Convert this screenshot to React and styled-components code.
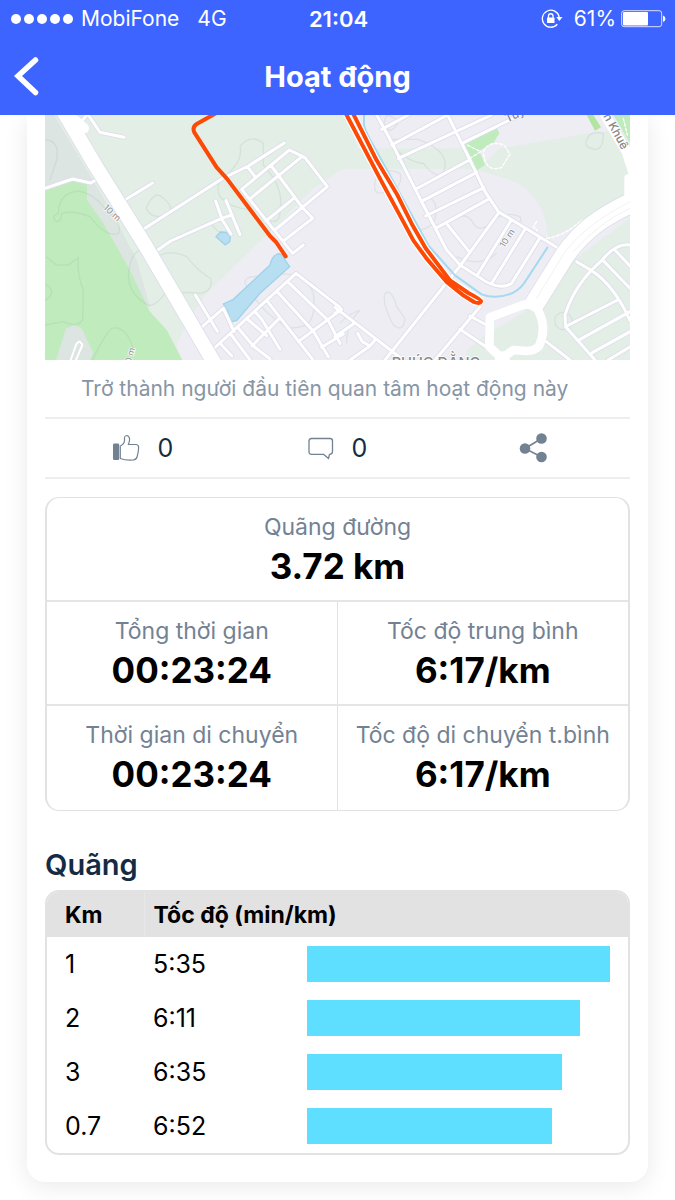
import React from "react";
import styled, { createGlobalStyle } from "styled-components";

const stats = [
  { label: "Quãng đường", value: "3.72 km", wide: true },
  { label: "Tổng thời gian", value: "00:23:24" },
  { label: "Tốc độ trung bình", value: "6:17/km" },
  { label: "Thời gian di chuyển", value: "00:23:24" },
  { label: "Tốc độ di chuyển t.bình", value: "6:17/km" },
];

const splits = [
  { km: "1", pace: "5:35", percent: 100 },
  { km: "2", pace: "6:11", percent: 90 },
  { km: "3", pace: "6:35", percent: 84 },
  { km: "0.7", pace: "6:52", percent: 81 },
];

// Streets on the left half of the map
const westStreets = `
  M145 15 L180 67 L252 82 M15 235 L98 207 L152 219 L176 206
  M122 60 L122 38 L140 15 M258 268 L338 219
  M310 358 L545 207 L625 168 L733 99
  M350 422 L392 393 L545 325 L575 315 M527 273 L547 330 L573 372 M558 272 L600 374
  M605 238 L748 120 L795 143 L862 230 L705 360
  M628 268 L783 142 M622 170 L645 200 M692 165 L785 290 L818 325 L730 393
  M678 333 L765 262 M605 238 L758 430 L790 405
  M466 555 L532 664 M484 652 L550 595 L582 665
  M520 717 L768 490 L900 592 M572 672 L630 750 M540 700 L575 737
  M595 655 L640 708 L690 747 M625 630 L680 677 M648 608 L665 628 L720 718
  M683 575 L818 748 M712 545 L820 664 L865 740 M743 515 L865 632 L900 700
  M636 708 L718 625 M775 695 L905 598 M845 712 L910 672`;

// Streets on the right half of the map
const eastStreets = `
  M125 15 L165 88 L265 285 L335 420 L375 465 L430 500 Q490 545 530 520 L612 388
  M338 15 L405 150 L450 245 L490 305 L665 412
  M140 58 L220 15 M170 105 L332 18 M190 145 L470 15 M385 98 L555 15
  M243 237 L403 150 M258 275 L425 187 M272 318 L447 233 M302 355 L465 265
  M338 345 L405 428 M490 310 L375 468 L150 750 M527 333 L427 495 M570 358 L470 520
  M0 592 L205 750 M435 590 L300 750 M405 618 L460 648 M375 658 L455 712
  M0 610 L15 600 M0 680 L60 638 M68 670 L82 695 L105 708 L45 750 M120 690 L105 708
  M625 688 L705 750 M725 455 L772 483 Q840 530 885 632
  M885 405 Q840 400 800 452 Q720 520 690 615 L692 650 L780 750
  M695 648 L848 570 M735 688 L885 605 M772 728 L885 665 M820 750 L885 710
  M838 418 L885 468 M805 452 L885 535`;

const GlobalStyle = createGlobalStyle`
  * {
    box-sizing: border-box;
  }

  body {
    margin: 0;
    background: #fff;
    color: #000;
    font-family: Inter, "Noto Sans", sans-serif;
  }
`;

const RouteMap = () => (
  <MapDrawing
    viewBox="15 15 1755 735"
    preserveAspectRatio="xMidYMid slice"
    role="img"
    aria-label="Bản đồ hoạt động"
  >
    <rect x="15" y="15" width="1755" height="735" fill="#eeedf4" />

    {/* land use */}
    <path
      fill="#e3eee6"
      d="M15 15 H915 L955 115 H1275 L1305 177 H915 Q895 183 885 192 L820 235 L680 375 L500 550 L445 630 L410 705 L425 750 H15 Z"
    />
    <path
      fill="#e3eee6"
      d="M1380 115 L1655 68 L1770 60 V275 L1525 385 Q1515 250 1405 208 L1310 180 Z"
    />
    <path fill="#e3eee6" d="M1770 325 L1640 420 L1430 600 L1280 720 V750 H1770 Z" />
    <path fill="#dce5e2" d="M15 15 H42 L215 305 L290 450 L330 590 L60 560 L15 240 Z" />
    <path
      fill="#bfebbd"
      d="M15 242 L100 212 L141 222 V270 L190 340 L265 472 L330 605 L380 660 L427 750 H15 Z"
    />
    <path fill="#dce5e2" d="M48 750 L78 655 L103 645 L125 655 L160 728 L150 750 Z" />
    <path
      fill="#bfebbd"
      d="M1275 102 L1370 52 L1378 70 L1360 100 L1318 122 L1335 165 L1310 181 Z M1720 15 H1770 V98 Z"
    />
    <path fill="#b2e5a0" d="M1640 15 H1660 L1683 52 L1665 62 Z" />

    {/* contour lines */}
    <g fill="none" stroke="#8da79a" strokeOpacity="0.16" strokeWidth="4">
      <path d="M15 90 Q60 90 50 150 L30 210 M50 335 Q30 320 55 310 Q55 250 115 243 Q160 250 190 290 Q250 340 235 370 Q200 385 150 320 Q100 300 65 310 Q65 335 50 335" />
      <path d="M18 440 L50 465 H85 L115 443 Q110 490 130 540 L128 630 Q110 655 70 635 L15 645 M15 522 Q45 540 30 560 L15 572" />
      <path d="M158 750 Q190 680 215 655 Q255 645 278 710 V730 M318 295 Q345 235 370 265 Q400 290 390 310 Q340 335 318 295" />
      <path d="M325 417 Q270 410 265 500 Q270 560 330 587 Q355 580 375 550 Q450 545 485 550 Q520 540 512 505 Q480 490 440 440 Q400 420 360 435" />
      <path d="M600 108 Q635 70 670 100 V165 Q720 220 722 270 Q725 350 690 330 M600 108 Q610 150 565 190 Q520 220 540 260 Q570 295 630 298" />
      <path d="M620 530 Q600 495 665 500 Q790 470 820 550 Q830 620 800 645 Q740 665 725 640 Q670 610 620 530 M512 340 Q540 315 570 365 H535 Z" />
      <path d="M1040 15 Q1020 60 1055 60 Q1095 30 1040 15 M1055 88 H1135 Q1245 130 1205 195 Q1180 200 1150 160 Q1110 160 1055 105" />
      <path d="M1015 250 Q995 240 1010 200 Q1040 170 1080 190 Q1095 240 1015 250 M1150 290 Q1160 240 1185 280 Q1200 350 1140 360 M1250 325 Q1280 305 1300 340 Q1320 370 1350 340 Q1390 300 1440 320 Q1450 340 1420 340" />
      <path d="M1035 550 Q1055 535 1070 590 L1095 625 Q1090 670 1060 645 Q1025 580 1035 550 M1640 90 Q1650 60 1690 70 Q1690 125 1660 117 Q1630 110 1640 90" />
      <circle cx="1570" cy="633" r="26" />
      <path d="M1250 440 Q1320 475 1370 430 M920 700 Q920 640 960 600 Q920 615 900 640" />
    </g>

    {/* water */}
    <path
      fill="#b7dff1"
      stroke="#9fd2ea"
      strokeWidth="4"
      d="M712 432 Q728 428 735 450 L749 470 L660 550 L590 632 L573 635 L562 600 L550 582 L580 568 L690 465 Q695 440 712 432 Z M528 380 L542 366 L560 368 L571 380 L569 395 L556 405 L543 394 Z"
    />

    {/* streets: casing, then white fill */}
    <g fill="none" strokeLinejoin="round" strokeLinecap="round">
      <g stroke="#dddeea" strokeWidth="14">
        <path d={westStreets} />
        <path d={eastStreets} transform="translate(885 0)" />
      </g>
      <g stroke="#fff" strokeWidth="9">
        <path d={westStreets} />
        <path d={eastStreets} transform="translate(885 0)" />
      </g>
      <path stroke="#fff" strokeWidth="6" d="M92 750 L108 705 Q118 685 127 705 L108 750" />
      <path
        stroke="#fff"
        strokeWidth="4"
        strokeDasharray="9 6"
        d="M1282 105 L1322 125 L1290 145 M1330 125 Q1345 90 1392 105 L1410 132 L1385 172 Q1335 190 1330 125 M1520 385 Q1580 375 1625 330 M1490 335 L1480 350 L1492 362 M1750 25 L1762 75"
      />

      {/* main roads */}
      <path stroke="#dddeea" strokeWidth="48" d="M68 0 L165 165 L318 410 L535 780" />
      <path stroke="#fff" strokeWidth="43" d="M68 0 L165 165 L318 410 L535 780" />
      <path stroke="#fff" strokeWidth="30" d="M70 0 L132 55 M1695 15 L1760 125 L1785 205" />
      <path stroke="#dddeea" strokeWidth="64" d="M1800 266 L1770 280 Q1700 315 1660 345 Q1610 385 1575 435 L1475 595" />
      <path stroke="#fff" strokeWidth="59" d="M1800 266 L1770 280 Q1700 315 1660 345 Q1610 385 1575 435 L1475 595" />
      <path stroke="#fff" strokeWidth="24" d="M1765 205 V280" />
      <path stroke="#f2f2f5" strokeWidth="3" d="M1770 275 Q1640 340 1575 425 L1490 565 M1770 295 Q1680 335 1600 425" />
      <path
        fill="#e3eee6"
        stroke="#fff"
        strokeWidth="26"
        d="M1350 622 L1455 583 Q1482 583 1495 602 Q1522 655 1497 708 Q1485 722 1460 723 L1420 720 L1385 745 L1348 710 Z"
      />
      <path fill="#eeedf4" stroke="none" d="M1363 632 L1450 599 L1458 602 L1363 660 Z" />
      <path stroke="#fff" strokeWidth="42" d="M1388 745 L1380 770" />

      {/* canal */}
      <path
        stroke="#a3daf0"
        strokeWidth="6"
        d="M972 15 V46 Q980 75 1000 106 L1165 406 L1245 496 L1325 553 Q1370 570 1420 548 Q1445 535 1460 508 L1522 413"
      />
    </g>

    {/* recorded route */}
    <g fill="none" strokeLinejoin="round" strokeLinecap="round">
      <path
        fill="#fff"
        stroke="#fff"
        strokeWidth="19"
        d="M912 0 L1020 206 L1085 326 L1120 391 L1160 446 L1220 516 L1270 556 L1308 579 L1320 568 L1230 511 L1158 416 L1115 341 L1070 251 L1010 151 L934 0"
      />
      <path
        stroke="#fc4905"
        strokeWidth="12"
        d="M545 0 L470 42 Q456 51 463 67 L530 172 L560 205 L690 378 L708 396 L737 439"
      />
      <path
        stroke="#fc4905"
        strokeWidth="12"
        d="M912 0 L1020 206 L1085 326 L1120 391 L1160 446 L1220 516 L1270 556 L1302 576 Q1320 583 1323 574 Q1323 568 1285 549 L1230 511 L1158 416 L1115 341 L1070 251 L1010 151 L934 0"
      />
    </g>

    <MapLabel transform="translate(188 295) rotate(43)">10 m</MapLabel>
    <MapLabel transform="translate(270 773) rotate(-75)">10 m</MapLabel>
    <MapLabel transform="translate(1393 415) rotate(-57)">10 m</MapLabel>
    <MapLabel $street transform="translate(1402 38) rotate(-25)">
      Tuy
    </MapLabel>
    <MapLabel $street transform="translate(1689 18) rotate(61)">
      n Khuê
    </MapLabel>
    <MapLabel $place x="1055" y="774">
      PHÚC ĐẰNG
    </MapLabel>
  </MapDrawing>
);

const BackIcon = () => (
  <svg width="28" height="42" viewBox="0 0 28 42" aria-hidden="true">
    <path
      d="M23.500 4 L6 20 L23.500 36.500"
      fill="none"
      stroke="#fff"
      strokeWidth="5.500"
      strokeLinecap="round"
      strokeLinejoin="miter"
    />
  </svg>
);

const RotationLockIcon = () => (
  <svg width="22" height="20" viewBox="0 0 22 20" aria-hidden="true">
    <path
      d="M18.200 8 A8.500 8.500 0 1 0 16.300 15.300"
      fill="none"
      stroke="#fff"
      strokeWidth="1.300"
    />
    <path d="M15.200 8 H21.500 L18.300 12 Z" fill="#fff" />
    <rect x="6" y="8.500" width="7.500" height="5.500" rx="0.600" fill="#fff" />
    <path d="M7.500 9 V7 A2.200 2.200 0 0 1 12 7 V9" fill="none" stroke="#fff" strokeWidth="1.300" />
  </svg>
);

const BatteryIcon = () => (
  <svg width="45" height="18" viewBox="0 0 45 18" aria-hidden="true">
    <rect x="0.700" y="0.700" width="40" height="16" rx="2.500" fill="none" stroke="#fff" strokeOpacity="0.800" />
    <rect x="2" y="2" width="25" height="13.400" rx="1" fill="#fff" />
    <path d="M42 5.500 Q44.500 6.500 44.500 8.700 Q44.500 11 42 12 Z" fill="#fff" />
  </svg>
);

const LikeIcon = () => (
  <svg width="28" height="28" viewBox="0 0 28 28" aria-hidden="true">
    <rect x="1" y="9.500" width="6.200" height="16.500" rx="1.200" fill="#738293" />
    <path
      d="M8.300 12 Q12.300 10 12.500 6.500 V3.500 Q12.800 1.500 14.800 1.500 Q17.500 2 17.600 5.500 Q17.500 8.200 16.300 10.500 H24 Q27 11 26.600 14 Q26.500 18 25.200 22.500 Q24.300 25.800 21.500 26 Q13.500 26.600 8.300 24.500 Z"
      fill="none"
      stroke="#738293"
      strokeWidth="1.200"
      strokeLinejoin="round"
    />
  </svg>
);

const CommentIcon = () => (
  <svg width="26" height="24" viewBox="0 0 26 24" aria-hidden="true">
    <path
      d="M3.500 2.500 H22 Q24.500 2.500 24.500 5 V15.500 Q24.500 18.300 21.500 18.300 L20.500 22.500 L15.500 18.300 H3.500 Q1 18.300 1 15.500 V5 Q1 2.500 3.500 2.500 Z"
      fill="none"
      stroke="#738293"
      strokeWidth="1.300"
      strokeLinejoin="round"
    />
  </svg>
);

const ShareIcon = () => (
  <svg width="30" height="30" viewBox="0 0 30 30" aria-hidden="true">
    <path d="M23.500 5.500 L7 15.500 L23.500 24" fill="none" stroke="#738293" strokeWidth="1.600" />
    <circle cx="23.500" cy="5.500" r="5.300" fill="#738293" />
    <circle cx="7" cy="15.500" r="5.300" fill="#738293" />
    <circle cx="23.500" cy="24" r="5.300" fill="#738293" />
  </svg>
);

const App = () => (
  <>
    <GlobalStyle />
    <Header>
      <StatusBar>
        <StatusGroup>
          <SignalDots>
            {[1, 2, 3, 4, 5].map((dot) => (
              <Dot key={dot} />
            ))}
          </SignalDots>
          <span>MobiFone</span>
          <Network>4G</Network>
        </StatusGroup>
        <Clock>21:04</Clock>
        <StatusGroup $end>
          <RotationLockIcon />
          <BatteryLevel>
            61%
            <BatteryIcon />
          </BatteryLevel>
        </StatusGroup>
      </StatusBar>
      <NavBar>
        <BackButton type="button" aria-label="Quay lại">
          <BackIcon />
        </BackButton>
        <Title>Hoạt động</Title>
      </NavBar>
    </Header>

    <Card>
      <RouteMap />
      <Note>Trở thành người đầu tiên quan tâm hoạt động này</Note>

      <Actions>
        <ActionButton type="button" aria-label="Thích">
          <LikeIcon />
          <span>0</span>
        </ActionButton>
        <ActionButton type="button" aria-label="Bình luận">
          <CommentIcon />
          <span>0</span>
        </ActionButton>
        <ActionButton type="button" aria-label="Chia sẻ">
          <ShareIcon />
        </ActionButton>
      </Actions>

      <Stats>
        {stats.map((stat) => (
          <Stat key={stat.label} $wide={stat.wide}>
            <StatLabel>{stat.label}</StatLabel>
            <StatValue>{stat.value}</StatValue>
          </Stat>
        ))}
      </Stats>

      <SectionTitle>Quãng</SectionTitle>
      <TableFrame>
        <SplitTable>
          <colgroup>
            <KmColumn />
            <PaceColumn />
            <col />
          </colgroup>
          <thead>
            <tr>
              <KmHeading scope="col">Km</KmHeading>
              <Heading scope="col" colSpan={2}>
                Tốc độ (min/km)
              </Heading>
            </tr>
          </thead>
          <tbody>
            {splits.map((split) => (
              <tr key={split.km}>
                <KmCell>{split.km}</KmCell>
                <Cell>{split.pace}</Cell>
                <BarCell>
                  <Bar style={{ width: `${split.percent}%` }} />
                </BarCell>
              </tr>
            ))}
          </tbody>
        </SplitTable>
      </TableFrame>
    </Card>
  </>
);

const Header = styled.header`
  position: sticky;
  top: 0;
  z-index: 1;
  background: #3e64ff;
  color: #fff;
`;

const StatusBar = styled.div`
  display: grid;
  grid-template-columns: 1fr auto 1fr;
  align-items: center;
  height: 38px;
  padding: 0 9px 0 11px;
  font-size: 21px;
  line-height: 24px;
`;

const StatusGroup = styled.div`
  display: flex;
  align-items: center;
  justify-content: ${(props) => (props.$end ? "flex-end" : "flex-start")};
  gap: ${(props) => (props.$end ? "11px" : "8px")};
`;

const SignalDots = styled.div`
  display: flex;
  gap: 3px;
`;

const Dot = styled.span`
  width: 10px;
  height: 10px;
  border-radius: 50%;
  background: #fff;
`;

const Network = styled.span`
  margin-left: 10px;
`;

const Clock = styled.span`
  font-size: 22px;
  font-weight: 600;
`;

const BatteryLevel = styled.div`
  display: flex;
  align-items: center;
  gap: 5px;
`;

const NavBar = styled.div`
  display: grid;
  grid-template-columns: 48px 1fr 48px;
  align-items: center;
  height: 77px;
`;

const BackButton = styled.button`
  display: flex;
  align-items: center;
  justify-content: flex-start;
  padding: 0 0 0 12px;
  border: none;
  background: none;
  cursor: pointer;
`;

const Title = styled.h1`
  margin: 0;
  font-size: 29px;
  line-height: 34px;
  font-weight: 700;
  text-align: center;
`;

const Card = styled.main`
  margin: 0 27px 18px;
  padding: 0 18px 27px;
  border-radius: 0 0 18px 18px;
  background: #fff;
  box-shadow: 0 4px 24px rgba(0, 0, 0, 0.09);
`;

const MapDrawing = styled.svg`
  display: block;
  width: 100%;
  height: 245px;
`;

const MapLabel = styled.text`
  fill: ${(props) => (props.$street || props.$place ? "#888" : "#999")};
  stroke: #fff;
  stroke-width: 4px;
  paint-order: stroke;
  font-size: ${(props) => (props.$place ? "44px" : props.$street ? "35px" : "27px")};
  font-weight: 500;
`;

const Note = styled.p`
  margin: 0;
  padding: 15px 36px 14px;
  color: #8795a5;
  font-size: 21px;
  line-height: 28px;
  white-space: nowrap;
`;

const Actions = styled.div`
  display: grid;
  grid-template-columns: repeat(3, 1fr);
  height: 62px;
  border-top: 2px solid #eee;
  border-bottom: 2px solid #eee;
`;

const ActionButton = styled.button`
  display: flex;
  align-items: center;
  justify-content: center;
  gap: 18px;
  padding: 0;
  border: none;
  background: none;
  color: #142b45;
  font-family: inherit;
  font-size: 25px;
  line-height: 28px;
  cursor: pointer;
`;

const Stats = styled.dl`
  display: grid;
  grid-template-columns: 1fr 1fr;
  margin: 18px 0 36px;
  border: 1px solid #e2e2e2;
  border-width: 1px 2px;
  border-radius: 14px;
`;

const Stat = styled.div`
  grid-column: ${(props) => (props.$wide ? "1 / -1" : "auto")};
  height: 104px;
  padding-top: 14px;
  border-bottom: 2px solid #e5e5e5;
  text-align: center;

  &:nth-child(even) {
    border-right: 1px solid #e2e2e2;
  }

  &:nth-last-child(-n + 2) {
    border-bottom: none;
  }
`;

const StatLabel = styled.dt`
  color: #738293;
  font-size: 23px;
  line-height: 30px;
  white-space: nowrap;
`;

const StatValue = styled.dd`
  margin: 4px 0 0;
  font-size: 35px;
  line-height: 40px;
  font-weight: 700;
`;

const SectionTitle = styled.h2`
  margin: 0 0 7px;
  color: #142b45;
  font-size: 29px;
  line-height: 36px;
  font-weight: 600;
`;

const TableFrame = styled.div`
  overflow: hidden;
  border: 2px solid #e2e2e2;
  border-radius: 14px;
`;

const SplitTable = styled.table`
  width: 100%;
  border-collapse: collapse;
  table-layout: fixed;
  text-align: left;
`;

const KmColumn = styled.col`
  width: 97px;
`;

const PaceColumn = styled.col`
  width: 163px;
`;

const Heading = styled.th`
  height: 45px;
  padding: 0 9px;
  background: #e2e2e2;
  font-size: 23px;
  line-height: 28px;
  font-weight: 700;
`;

const KmHeading = styled(Heading)`
  padding: 0 0 0 18px;
  border-right: 1px solid #e8e8e8;
`;

const Cell = styled.td`
  height: 54px;
  padding: 0 9px;
  font-size: 25px;
  line-height: 28px;
`;

const KmCell = styled(Cell)`
  padding: 0 0 0 18px;
`;

const BarCell = styled(Cell)`
  padding: 0 18px 0 0;
`;

const Bar = styled.div`
  height: 36px;
  background: #5edfff;
`;

export default App;
